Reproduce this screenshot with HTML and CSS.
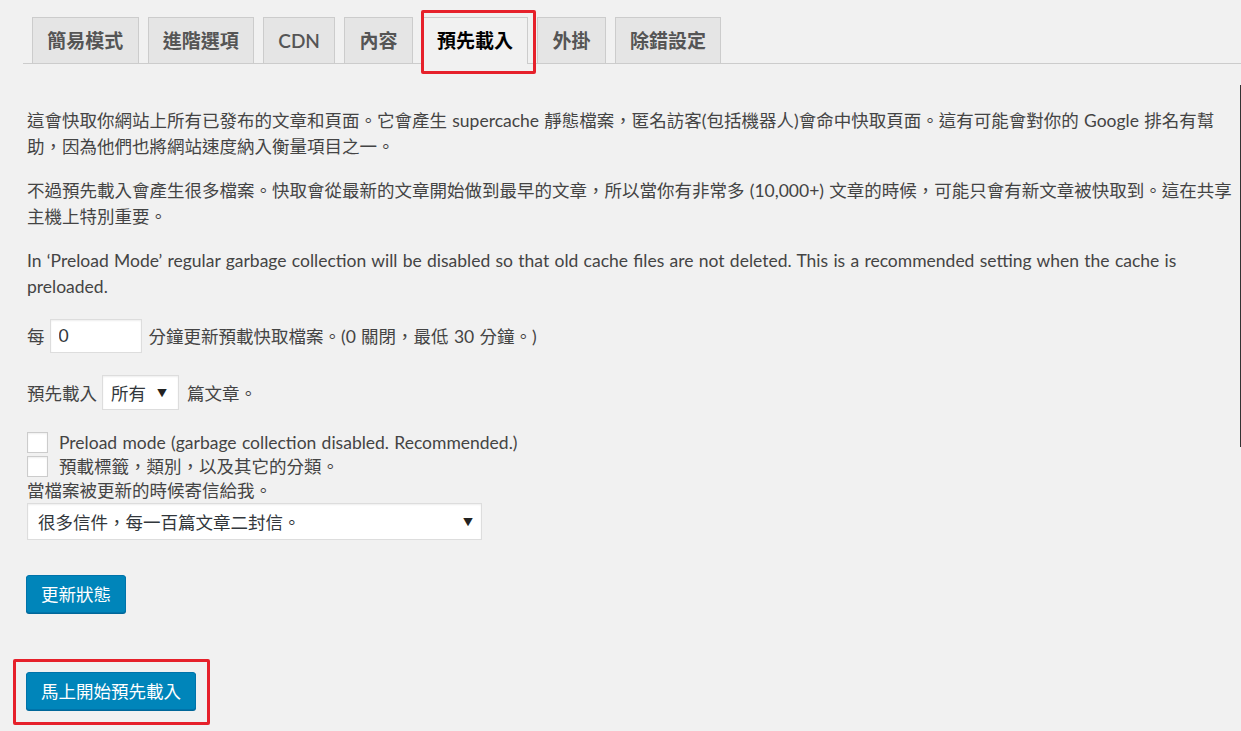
FILE: index.html
```html
<!DOCTYPE html>
<html>
  <head>
    <title>WP Super Cache - 預先載入</title>
    <link rel="stylesheet" href="styles.css">
  </head>

  <body>
    <div class="wrap">
      <nav class="tabs">
        <a class="tab">簡易模式</a>
        <a class="tab">進階選項</a>
        <a class="tab">CDN</a>
        <a class="tab">內容</a>
        <a class="tab active marked">預先載入</a>
        <a class="tab">外掛</a>
        <a class="tab">除錯設定</a>
      </nav>

      <div class="content">
        <p>這會快取你網站上所有已發布的文章和頁面。它會產生 supercache 靜態檔案，匿名訪客(包括機器人)會命中快取頁面。這有可能會對你的 Google 排名有幫助，因為他們也將網站速度納入衡量項目之一。</p>
        <p>不過預先載入會產生很多檔案。快取會從最新的文章開始做到最早的文章，所以當你有非常多 (10,000+) 文章的時候，可能只會有新文章被快取到。這在共享主機上特別重要。</p>
        <p>In ‘Preload Mode’ regular garbage collection will be disabled so that old cache files are not deleted. This is a recommended setting when the cache is preloaded.</p>

        <div class="row row-interval">
          <span>每</span>
          <input type="text" class="num-input" value="0" />
          <span>分鐘更新預載快取檔案。(0 關閉，最低 30 分鐘。)</span>
        </div>

        <div class="row row-posts">
          <span>預先載入</span>
          <div class="fake-select small">所有<span class="arrow">▼</span></div>
          <span>篇文章。</span>
        </div>

        <label class="check first"><input type="checkbox" />Preload mode (garbage collection disabled. Recommended.)</label>
        <label class="check"><input type="checkbox" />預載標籤，類別，以及其它的分類。</label>
        <div class="mail-label">當檔案被更新的時候寄信給我。</div>
        <div class="fake-select wide">很多信件，每一百篇文章二封信。<span class="arrow">▼</span></div>

        <button class="btn btn-update">更新狀態</button>
        <div>
          <button class="btn btn-preload marked">馬上開始預先載入</button>
        </div>
      </div>
    </div>
    <div class="edge"></div>
  </body>
</html>
```

FILE: styles.css
```css
body {
  margin: 0;
  background-color: #f1f1f1;
  color: #444;
  font-family: Lato, "Noto Sans CJK TC", sans-serif;
  font-size: 17.5px;
  word-spacing: 0.8px;
}

.wrap {
  padding-top: 17px;
}

.tabs {
  display: flex;
  align-items: flex-end;
  gap: 9px;
  margin-left: 23px;
  padding-left: 9px;
  border-bottom: 1px solid #ccc;
  word-spacing: 0;
}

.tab {
  display: block;
  padding: 0 14.25px;
  line-height: 45px;
  font-size: 19px;
  font-weight: 600;
  color: #555;
  background-color: #e5e5e5;
  border: 1px solid #ccc;
  border-bottom: none;
}

.tab.active {
  background-color: #f1f1f1;
  color: #000;
  margin-bottom: -1px;
  line-height: 46px;
}

.marked {
  position: relative;
}

.tab.marked::after {
  content: "";
  position: absolute;
  top: -8px;
  left: -2px;
  right: -9px;
  bottom: -10px;
  border: 3px solid #e6212b;
  border-radius: 2px;
}

.content {
  width: 1206px;
  padding: 44px 0 40px 27px;
}

.content p {
  margin: 0 0 17.5px;
  line-height: 26.25px;
}

.row {
  display: flex;
  align-items: center;
}

.row-interval {
  margin-top: 18px;
  height: 34px;
}

.num-input {
  box-sizing: border-box;
  width: 92px;
  height: 34px;
  margin: 0 7px 0 5px;
  padding: 0 8px;
  border: 1px solid #ddd;
  box-shadow: inset 0 1px 2px rgba(0, 0, 0, 0.07);
  background: #fff;
  font: inherit;
  color: #32373c;
}

.row-posts {
  margin-top: 22px;
  height: 35px;
}

.fake-select {
  box-sizing: border-box;
  display: flex;
  align-items: center;
  justify-content: space-between;
  background: #fff;
  border: 1px solid #ddd;
  box-shadow: inset 0 1px 2px rgba(0, 0, 0, 0.07);
  color: #32373c;
}

.fake-select .arrow {
  font-size: 10px;
  color: #222;
}

.fake-select.small {
  width: 77px;
  height: 35px;
  margin: 0 8px 0 5px;
  padding: 0 11px 0 8px;
}

.fake-select.wide {
  width: 455px;
  height: 37px;
  padding: 0 8px 0 10px;
}

.check {
  display: flex;
  align-items: center;
  height: 24px;
  line-height: 24px;
}

.check.first {
  margin-top: 21px;
}

.check input {
  appearance: none;
  width: 21px;
  height: 21px;
  margin: 0 11px 0 0;
  background: #fff;
  border: 1px solid #ccc;
  box-shadow: inset 0 1px 2px rgba(0, 0, 0, 0.07);
}

.mail-label {
  line-height: 24px;
  height: 24px;
}

.btn {
  display: block;
  margin-left: -1px;
  padding: 0 14px;
  height: 38px;
  background-color: #0085ba;
  border: 1px solid #0073aa;
  border-radius: 3px;
  box-shadow: 0 1px 0 #006799;
  color: #fff;
  font: inherit;
  cursor: pointer;
}

.btn-update {
  margin-top: 35px;
}

.btn-preload {
  margin-top: 59px;
}

.btn.marked::after {
  content: "";
  position: absolute;
  top: -14px;
  left: -14px;
  right: -15px;
  bottom: -16px;
  border: 3px solid #e6212b;
  border-radius: 2px;
}

.edge {
  position: absolute;
  left: 1240px;
  top: 85px;
  width: 1px;
  height: 362px;
  background-color: #333;
}
```
